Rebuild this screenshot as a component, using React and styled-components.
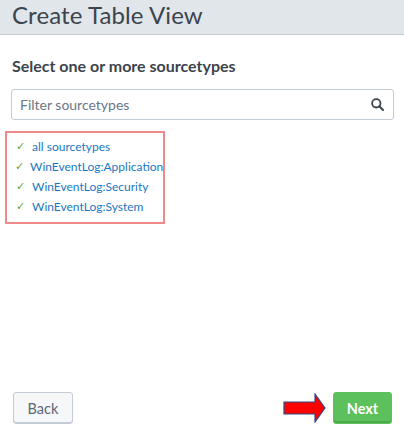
import React from "react";
import styled, { createGlobalStyle } from "styled-components";

const Global = createGlobalStyle`
  html, body { margin: 0; padding: 0; background: #fff; }
  body { font-family: "Lato", "Open Sans", sans-serif; }
`;

const Page = styled.div`
  width: 404px;
  height: 434px;
  display: flex;
  flex-direction: column;
  overflow: hidden;
  background: #fff;
`;

const Header = styled.div`
  height: 34px;
  background: #e1e6eb;
  border-bottom: 1px solid #c3cbd4;
  display: flex;
  align-items: center;
  padding: 0 12px;
  box-sizing: content-box;
`;

const Title = styled.h1`
  margin: 0;
  margin-top: -5px;
  font-size: 24px;
  font-weight: 400;
  color: #3c444d;
  letter-spacing: 0.1px;
`;

const Body = styled.div`
  flex: 1;
  display: flex;
  flex-direction: column;
  padding: 0 10px 0 11px;
`;

const Subtitle = styled.h2`
  margin: 21px 0 0 1px;
  font-size: 16px;
  font-weight: 700;
  color: #3c444d;
  line-height: 20px;
`;

const SearchBox = styled.div`
  margin-top: 13px;
  height: 29px;
  border: 1px solid #c3cbd4;
  border-radius: 3px;
  display: flex;
  align-items: center;
  padding: 0 9px 0 8px;
`;

const Input = styled.input`
  flex: 1;
  border: none;
  outline: none;
  font-family: inherit;
  font-size: 14px;
  color: #3c444d;
  background: transparent;
  padding: 0;
  &::placeholder { color: #6b7785; }
`;

const Highlight = styled.div`
  box-sizing: border-box;
  margin: 11px 0 0 -6px;
  width: 160px;
  height: 93px;
  border: 2px solid #f08a8a;
  display: flex;
  flex-direction: column;
  padding: 3px 0 0 8px;
`;

const Item = styled.div`
  display: flex;
  align-items: center;
  height: 20px;
  gap: 6px;
  font-size: 12px;
  color: #1a78c2;
  white-space: nowrap;
`;

const Check = styled.span`
  width: 11px;
  display: inline-flex;
  justify-content: center;
  color: #65a637;
  font-size: 11px;
`;

const Footer = styled.div`
  display: flex;
  align-items: center;
  justify-content: space-between;
  padding: 0 12px 10px 13px;
`;

const Button = styled.button`
  height: 32px;
  padding: 0;
  border-radius: 3px;
  font-family: inherit;
  font-size: 14.5px;
  cursor: pointer;
  border: 1px solid ${p => (p.$primary ? "#5cc05c" : "#c3cbd4")};
  background: ${p => (p.$primary ? "#5cc05c" : "#f5f7f9")};
  color: ${p => (p.$primary ? "#fff" : "#5c6773")};
  font-weight: ${p => (p.$primary ? 700 : 400)};
  box-shadow: ${p => (p.$primary ? "inset 0 -2px 0 #4ca94c" : "inset 0 -1px 0 #c3cbd4")};
  width: ${p => p.$w}px;
`;

const NextGroup = styled.div`
  display: flex;
  align-items: center;
  gap: 6px;
`;

const SearchIcon = () => (
  <svg width="13" height="13" viewBox="0 0 13 13">
    <circle cx="5.3" cy="5.3" r="4.2" fill="none" stroke="#3c444d" strokeWidth="1.8" />
    <line x1="8.3" y1="8.3" x2="12" y2="12" stroke="#3c444d" strokeWidth="2" strokeLinecap="round" />
  </svg>
);

const Arrow = () => (
  <svg width="44" height="30" viewBox="0 0 44 30">
    <polygon
      points="1,9 32,9 32,1 42,15 32,29 32,21 1,21"
      fill="#ff0000"
      stroke="#2e4a8a"
      strokeWidth="1.2"
    />
  </svg>
);

const items = [
  "all sourcetypes",
  "WinEventLog:Application",
  "WinEventLog:Security",
  "WinEventLog:System",
];

export default function App() {
  return (
    <Page>
      <Global />
      <Header>
        <Title>Create Table View</Title>
      </Header>
      <Body>
        <Subtitle>Select one or more sourcetypes</Subtitle>
        <SearchBox>
          <Input placeholder="Filter sourcetypes" />
          <SearchIcon />
        </SearchBox>
        <Highlight>
          {items.map(t => (
            <Item key={t}>
              <Check>✓</Check>
              {t}
            </Item>
          ))}
        </Highlight>
      </Body>
      <Footer>
        <Button $w={60}>Back</Button>
        <NextGroup>
          <Arrow />
          <Button $primary $w={59}>Next</Button>
        </NextGroup>
      </Footer>
    </Page>
  );
}
